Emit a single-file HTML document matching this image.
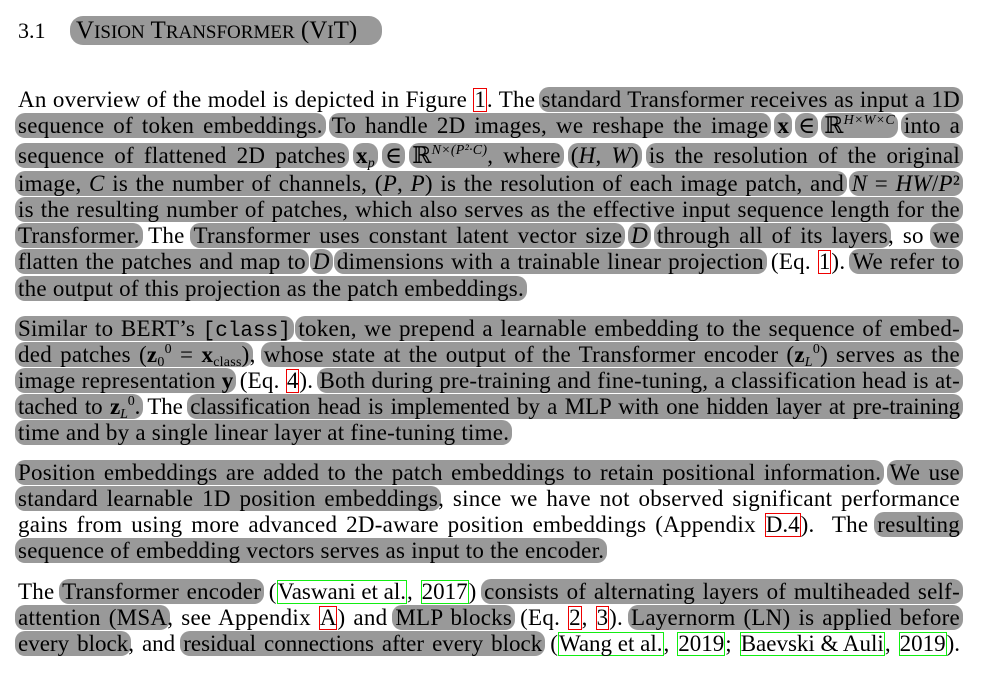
<!DOCTYPE html>
<html><head><meta charset="utf-8"><style>
body{margin:0;background:#fff;width:982px;height:681px;overflow:hidden;position:relative;font-family:"Liberation Serif","DejaVu Serif",serif;color:#000}
.l{position:absolute;left:18px;width:942px;height:26px;line-height:26px;font-size:23px;letter-spacing:0.25px;text-align:justify;text-align-last:justify;white-space:normal;overflow:visible}
.n{text-align-last:left}
.h{background:#999;border-radius:10px;padding:0 3px;margin:0 -3px}
i{font-style:italic}
.r,.g{display:inline-block;line-height:22px;height:24px;vertical-align:baseline;padding:0;border:1px solid #e00;box-sizing:border-box;letter-spacing:0}
.g{border-color:#1e1}
sup{font-size:14px;line-height:0;vertical-align:9px;font-style:italic}
sub{font-size:14px;line-height:0;vertical-align:-4px}
.mono{font-family:"Liberation Mono",monospace;font-size:21px;letter-spacing:0}
</style></head><body>
<div style="position:absolute;left:18px;top:17px;font-size:22px;line-height:28px">3.1</div>
<div style="position:absolute;left:70px;top:16px;width:306px;padding-left:6px;height:29px;background:#999;border-radius:13px;font-size:25px;line-height:30px;white-space:nowrap">V<span style="font-size:19px">ISION</span> T<span style="font-size:19px">RANSFORMER</span> (V<span style="font-size:19px">I</span>T)</div>

<div class="l" style="top:87px">An overview of the model is depicted in Figure <span class="r">1</span>. The <span class="h">standard Transformer receives as input a 1D</span></div>
<div class="l" style="top:113px"><span class="h">sequence of token embeddings.</span> <span class="h">To handle 2D images, we reshape the image</span> <span class="h"><b>x</b></span> <span class="h">∈</span> <span class="h">ℝ<sup>H×W×C</sup></span> <span class="h">into a</span></div>
<div class="l" style="top:143px"><span class="h">sequence of flattened 2D patches</span> <span class="h"><b>x</b><sub><i>p</i></sub></span> <span class="h">∈</span> <span class="h">ℝ<sup>N×(P²·C)</sup>, where</span> <span class="h">(<i>H</i>, <i>W</i>)</span> <span class="h">is the resolution of the original</span></div>
<div class="l" style="top:171px"><span class="h">image, <i>C</i> is the number of channels, (<i>P</i>, <i>P</i>) is the resolution of each image patch, and</span> <span class="h"><i>N</i> = <i>HW</i>/<i>P</i>²</span></div>
<div class="l" style="top:197px"><span class="h">is the resulting number of patches, which also serves as the effective input sequence length for the</span></div>
<div class="l" style="top:223px"><span class="h">Transformer.</span> The <span class="h">Transformer uses constant latent vector size</span> <span class="h"><i>D</i></span> <span class="h">through all of its layers</span>, so <span class="h">we</span></div>
<div class="l" style="top:249px"><span class="h">flatten the patches and map to</span> <span class="h"><i>D</i></span> <span class="h">dimensions with a trainable linear projection</span> (Eq. <span class="r">1</span>). <span class="h">We refer to</span></div>
<div class="l n" style="top:276px"><span class="h">the output of this projection as the patch embeddings.</span></div>

<div class="l" style="top:316px"><span class="h">Similar to BERT’s <span class="mono">[class]</span></span> <span class="h">token, we prepend a learnable embedding to the sequence of embed-</span></div>
<div class="l" style="top:342px"><span class="h">ded patches (<b>z</b><sub>0</sub><sup style="font-style:normal">0</sup> = <b>x</b><sub>class</sub>)</span>, <span class="h">whose state at the output of the Transformer encoder (<b>z</b><sub><i>L</i></sub><sup style="font-style:normal">0</sup>) serves as the</span></div>
<div class="l" style="top:368px"><span class="h">image representation <b>y</b></span> (Eq. <span class="r">4</span>). <span class="h">Both during pre-training and fine-tuning, a classification head is at-</span></div>
<div class="l" style="top:394px;letter-spacing:-0.1px"><span class="h">tached to <b>z</b><sub><i>L</i></sub><sup style="font-style:normal">0</sup>.</span> The <span class="h">classification head is implemented by a MLP with one hidden layer at pre&#8209;training</span></div>
<div class="l n" style="top:420px"><span class="h">time and by a single linear layer at fine-tuning time.</span></div>

<div class="l" style="top:460px"><span class="h">Position embeddings are added to the patch embeddings to retain positional information.</span> <span class="h">We use</span></div>
<div class="l" style="top:486px"><span class="h">standard learnable 1D position embeddings</span>, since we have not observed significant performance</div>
<div class="l" style="top:512px">gains from using more advanced 2D-aware position embeddings (Appendix <span class="r">D.4</span>).&nbsp; The <span class="h">resulting</span></div>
<div class="l n" style="top:538px"><span class="h">sequence of embedding vectors serves as input to the encoder.</span></div>

<div class="l" style="top:579px">The <span class="h">Transformer encoder</span> (<span class="g">Vaswani et al.</span>, <span class="g">2017</span>) <span class="h">consists of alternating layers of multiheaded self-</span></div>
<div class="l" style="top:605px"><span class="h">attention (MSA</span>, see Appendix <span class="r">A</span>) and <span class="h">MLP blocks</span> (Eq. <span class="r">2</span>, <span class="r">3</span>). <span class="h">Layernorm (LN) is applied before</span></div>
<div class="l" style="top:631px;letter-spacing:0"><span class="h">every block</span>, and <span class="h">residual connections after every block</span> (<span class="g">Wang et al.</span>, <span class="g">2019</span>; <span class="g">Baevski &amp; Auli</span>, <span class="g">2019</span>).</div>
</body></html>
